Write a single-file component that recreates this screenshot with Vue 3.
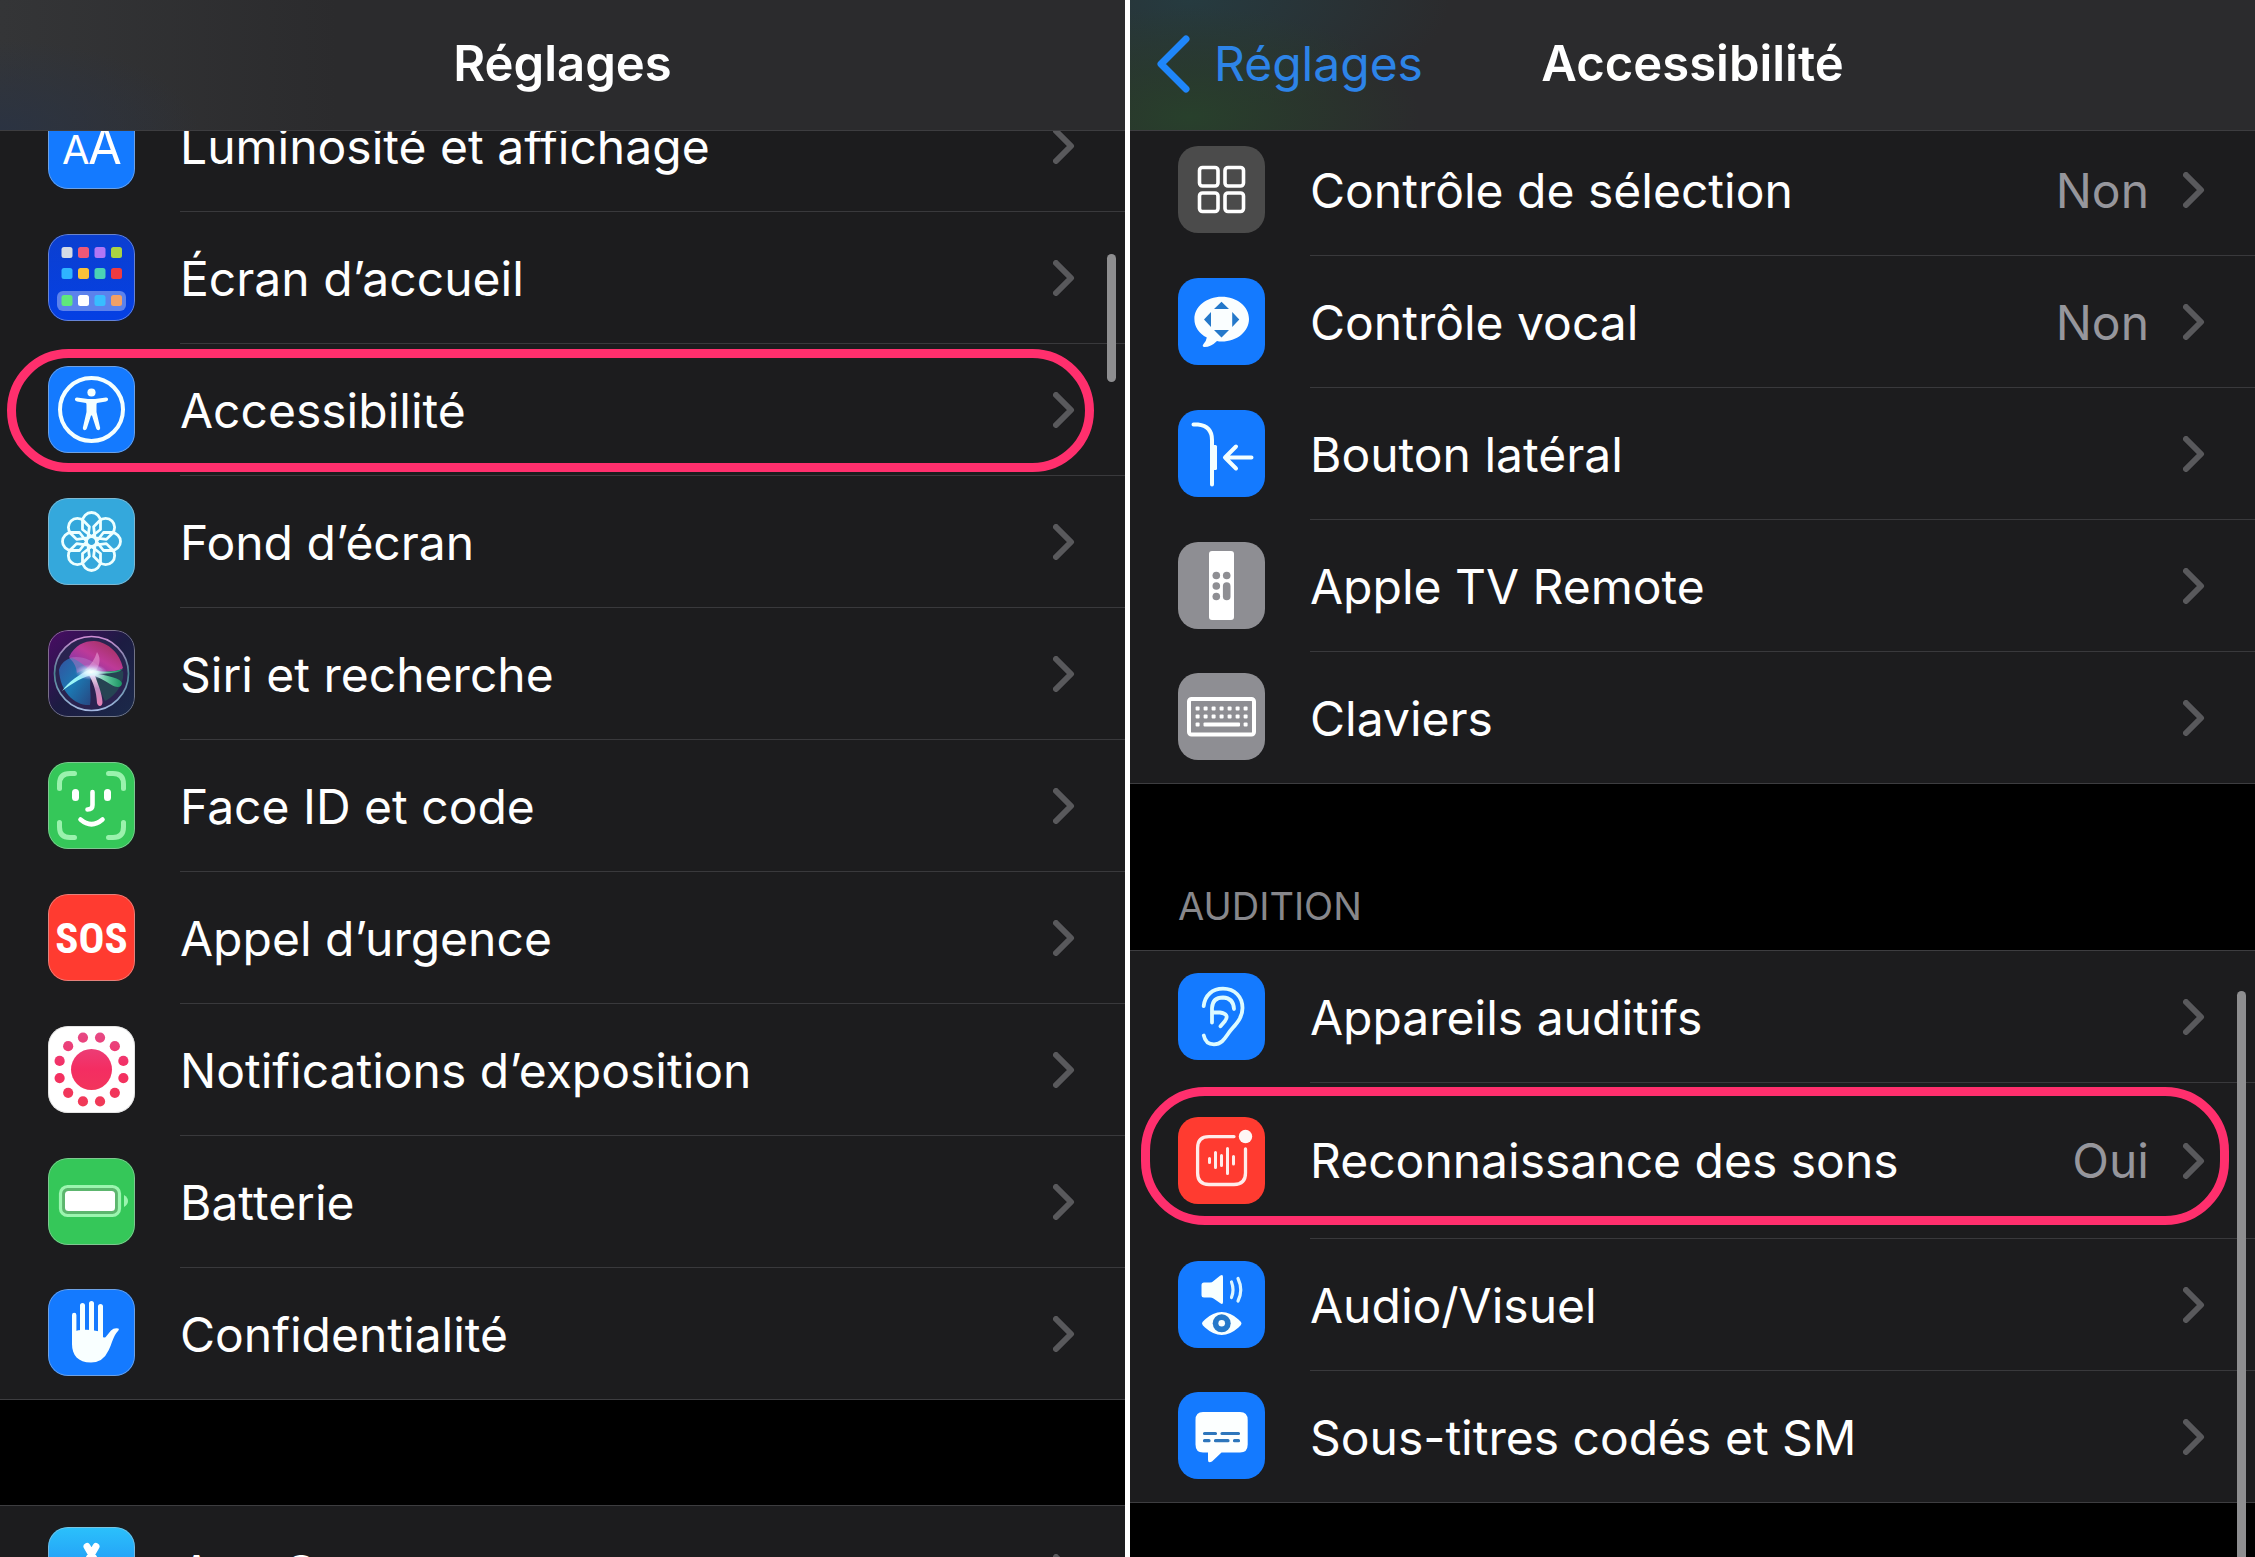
<template>
  <main class="screens">
    <section class="screen">
      <header class="nav-bar nav-settings">
        <h1 class="nav-title">Réglages</h1>
      </header>
      <div class="content content-settings">
        <ul v-for="(group, index) in settingsGroups" :key="index" class="group">
          <li v-for="row in group" :key="row.label" class="row">
            <a href="#" class="row-link">
              <span class="icon bordered" :class="row.icon">
                <svg viewBox="0 0 87 87" aria-hidden="true" v-html="icons[row.icon]"></svg>
              </span>
              <span class="row-body">
                <span class="row-label">{{ row.label }}</span>
                <svg class="chevron" viewBox="0 0 22 36" aria-hidden="true"><path d="M3 3l15 15L3 33" /></svg>
              </span>
            </a>
            <span v-if="row.highlighted" class="ring"></span>
          </li>
        </ul>
      </div>
      <span class="scrollbar scrollbar-settings"></span>
    </section>

    <section class="screen">
      <header class="nav-bar nav-accessibility">
        <a href="#" class="nav-back">
          <svg viewBox="0 0 34 58" aria-hidden="true"><path d="M30 4L5 29l25 25" /></svg>
          <span>Réglages</span>
        </a>
        <h1 class="nav-title">Accessibilité</h1>
      </header>
      <div class="content content-accessibility">
        <template v-for="group in accessibilityGroups" :key="group.id">
          <h2 v-if="group.title" class="group-title">{{ group.title }}</h2>
          <ul class="group">
            <li v-for="row in group.rows" :key="row.label" class="row" :class="{ tall: row.highlighted }">
              <a href="#" class="row-link">
                <span class="icon" :class="row.icon">
                  <svg viewBox="0 0 87 87" aria-hidden="true" v-html="icons[row.icon]"></svg>
                </span>
                <span class="row-body">
                  <span class="row-label">{{ row.label }}</span>
                  <span v-if="row.value" class="row-value">{{ row.value }}</span>
                  <svg class="chevron" viewBox="0 0 22 36" aria-hidden="true"><path d="M3 3l15 15L3 33" /></svg>
                </span>
              </a>
              <span v-if="row.highlighted" class="ring"></span>
            </li>
          </ul>
        </template>
      </div>
      <span class="scrollbar scrollbar-accessibility"></span>
    </section>
  </main>
</template>

<script setup>
const settingsGroups = [
  [
    { label: 'Luminosité et affichage', icon: 'display' },
    { label: 'Écran d’accueil', icon: 'home' },
    { label: 'Accessibilité', icon: 'accessibility', highlighted: true },
    { label: 'Fond d’écran', icon: 'wallpaper' },
    { label: 'Siri et recherche', icon: 'siri' },
    { label: 'Face ID et code', icon: 'faceid' },
    { label: 'Appel d’urgence', icon: 'sos' },
    { label: 'Notifications d’exposition', icon: 'exposure' },
    { label: 'Batterie', icon: 'battery' },
    { label: 'Confidentialité', icon: 'privacy' },
  ],
  [{ label: 'App Store', icon: 'appstore' }],
];

const accessibilityGroups = [
  {
    id: 'motor',
    rows: [
      { label: 'Contrôle de sélection', icon: 'switch', value: 'Non' },
      { label: 'Contrôle vocal', icon: 'voice', value: 'Non' },
      { label: 'Bouton latéral', icon: 'side' },
      { label: 'Apple TV Remote', icon: 'remote' },
      { label: 'Claviers', icon: 'keyboard' },
    ],
  },
  {
    id: 'hearing',
    title: 'AUDITION',
    rows: [
      { label: 'Appareils auditifs', icon: 'hearing' },
      { label: 'Reconnaissance des sons', icon: 'sound', value: 'Oui', highlighted: true },
      { label: 'Audio/Visuel', icon: 'audiovisual' },
      { label: 'Sous-titres codés et SM', icon: 'captions' },
    ],
  },
];

const homeColors = [
  ['#d5dbe6', '#ef5877', '#b176f5', '#aad343'],
  ['#2fb4ff', '#f9c13a', '#4bd3b5', '#ee3b41'],
  ['#5fe87c', '#ffffff', '#38bdff', '#f2a066'],
];
const homeApps = homeColors
  .map((line, y) =>
    line
      .map((fill, x) => `<rect x="${13.5 + x * 16.5}" y="${[13, 34, 61][y]}" width="11" height="11" rx="2.5" fill="${fill}"/>`)
      .join(''),
  )
  .join('');

const petals = [0, 45, 90, 135, 180, 225, 270, 315]
  .map((angle) => `<path transform="rotate(${angle})" d="M0-5L-9-12V-20A9 9 0 0 1 9-20V-12Z"/>`)
  .join('');

const exposureDots = Array.from({ length: 12 }, (_, i) => {
  const angle = ((i * 30 + 15) * Math.PI) / 180;
  return `<circle cx="${43.5 + 33 * Math.cos(angle)}" cy="${43.5 + 33 * Math.sin(angle)}" r="5.1"/>`;
}).join('');

const keyboardKeys = [35.5, 43.5]
  .map((y) => Array.from({ length: 7 }, (_, i) => `<rect x="${17.6 + i * 8}" y="${y - 2}" width="4" height="4" rx="1"/>`).join(''))
  .join('');

const icons = {
  display: `<g fill="#fff" font-family="Inter, sans-serif"><text x="14" y="62" font-size="40">A</text><text x="40" y="62" font-size="49">A</text></g>`,
  home: `<rect x="9" y="57" width="69" height="20" rx="6" fill="#5c82ec"/>${homeApps}`,
  accessibility: `<circle cx="43.5" cy="43.5" r="31.5" fill="none" stroke="#f4ffff" stroke-width="4"/>
    <g fill="#f4ffff"><circle cx="43.5" cy="26.5" r="4.1"/>
    <path d="M29 31.5L40 33H47L58 31.5Q60.5 31.8 60 34Q59.8 35 58 35.4L49 37Q48.5 37.3 48.5 39V46L52.2 62Q52.3 64 50.4 64.3Q48.8 64.3 48.2 62.5L44 49.5H43L38.8 62.5Q38.2 64.3 36.6 64.3Q34.7 64 34.8 62L38.5 46V39Q38.5 37.3 38 37L29 35.4Q27.2 35 27 34Q26.6 31.8 29 31.5Z"/></g>`,
  wallpaper: `<g transform="translate(43.5 43.5)" fill="none" stroke="#edffff" stroke-width="2.8" stroke-linejoin="round">${petals}<circle r="5"/></g>`,
  siri: `<defs>
      <linearGradient id="siri-pink" x1="0" y1="1" x2="1" y2="0"><stop offset="0" stop-color="#6a35b0"/><stop offset=".5" stop-color="#bd3a98"/><stop offset="1" stop-color="#9c2f4c"/></linearGradient>
      <linearGradient id="siri-blue" x1="0" y1="0" x2="1" y2="1"><stop offset="0" stop-color="#33529f"/><stop offset=".5" stop-color="#1c78b2"/><stop offset="1" stop-color="#27457f"/></linearGradient>
      <linearGradient id="siri-green" x1="0" y1="0" x2="1" y2="0"><stop offset="0" stop-color="#d9fff5"/><stop offset=".6" stop-color="#4bb98c"/><stop offset="1" stop-color="#15905d"/></linearGradient>
      <linearGradient id="siri-tail" x1="0" y1="0" x2="0" y2="1"><stop offset="0" stop-color="#fff"/><stop offset=".5" stop-color="#c08cc0"/><stop offset="1" stop-color="#e97fb4"/></linearGradient>
      <radialGradient id="siri-glow"><stop offset="0" stop-color="#fff"/><stop offset=".4" stop-color="#e4f5ff" stop-opacity=".8"/><stop offset="1" stop-color="#c9a8ff" stop-opacity="0"/></radialGradient>
      <linearGradient id="siri-edge" x1="0" y1="0" x2="0" y2="1"><stop offset="0" stop-color="#d08ed5"/><stop offset=".5" stop-color="#4a8290"/><stop offset="1" stop-color="#a4b8e0"/></linearGradient>
    </defs>
    <circle cx="43.5" cy="43.5" r="37" fill="#2a2350"/>
    <path d="M21 27C27 15 36 11 46 11C61 12 72 24 75 38C72 42 60 41 44 43C36 40 27 35 21 27Z" fill="url(#siri-pink)"/>
    <path d="M11 40C13 33 18 29 24 28C33 32 40 38 44 43C40 54 44 65 42 75C27 76 12 62 11 40Z" fill="url(#siri-blue)"/>
    <path d="M44 43L75 41C77 52 68 66 57 71C52 61 48 52 44 43Z" fill="#264453"/>
    <path d="M21 28C32 25 44 29 55 40C44 37 36 39 29 43C28 36 26 32 21 28Z" fill="#b876c8" opacity=".5"/>
    <path d="M49 22C54 29 51 38 46 43L37 40C43 35 47 29 49 22Z" fill="#e79bd4" opacity=".6"/>
    <path d="M44 40C56 42.5 66 42 75 39C72 43 60 43.5 50 44C61 46 72 48 74 53C74 58 68 58 62 54C56 50 50 47 44 45Z" fill="url(#siri-green)"/>
    <path d="M41 41L46 43C50 54 54 63 54.5 72C54.5 77 50 77 49 73C48.5 61 45 52 41 45Z" fill="url(#siri-tail)"/>
    <path d="M14 61C21 51 31 45 42 39L48 44C35 46 25 53 14 61Z" fill="#9bf5f7"/>
    <ellipse cx="43" cy="42" rx="16" ry="8" fill="url(#siri-glow)"/>
    <circle cx="43.5" cy="43.5" r="37" fill="none" stroke="url(#siri-edge)" stroke-width="1.7"/>`,
  faceid: `<g fill="none" stroke-linecap="round"><g stroke="#9af2ad" stroke-width="5"><path d="M11.5 26.5V22Q11.5 11.5 22 11.5H26.5M60.5 11.5H65Q75.5 11.5 75.5 22V26.5M75.5 60.5V65Q75.5 75.5 65 75.5H60.5M26.5 75.5H22Q11.5 75.5 11.5 65V60.5"/></g>
    <g stroke="#fff"><path stroke-width="7" d="M27.5 30.5V35.5M59.5 30.5V35.5"/><path stroke-width="4.6" d="M44.5 30V43Q44.5 47.5 39.5 47.5M32.5 57.5Q43.5 67 54.5 57.5"/></g></g>`,
  sos: `<text x="43.5" y="59" text-anchor="middle" fill="#fff" font-family="Liberation Sans Narrow, Roboto Condensed, DejaVu Sans Condensed, sans-serif" font-weight="700" font-size="43">SOS</text>`,
  exposure: `<defs><linearGradient id="exposure-fill" gradientUnits="userSpaceOnUse" x1="0" y1="6" x2="0" y2="80"><stop offset="0" stop-color="#e64a86"/><stop offset=".5" stop-color="#f42d62"/><stop offset="1" stop-color="#f03b57"/></linearGradient></defs>
    <g fill="url(#exposure-fill)"><circle cx="43.5" cy="43.5" r="20.5"/>${exposureDots}</g>`,
  battery: `<rect x="12.5" y="28.5" width="59" height="29" rx="7" fill="#5cb66e" stroke="#9bf5af" stroke-width="3.2"/><rect x="17" y="33" width="50" height="20" rx="3.5" fill="#fff"/><path d="M76 37Q80 39.5 80 43T76 49Z" fill="#9bf5af"/>`,
  privacy: `<g fill="none" stroke="#f6ffff" stroke-linecap="round"><path stroke-width="4.4" d="M26.2 26V54"/><path stroke-width="5" d="M34.5 16.5V50M43.5 14.5V50M52.5 17.5V50"/></g>
    <path d="M24 43Q32 40 43 41L55 43V48Q57 49.5 58.5 47L63 41.5Q66 38.5 70.5 39.5Q71.5 40.5 70 42C65 47 64 55 60.5 61.5Q55 73.5 43 73.5C30 73.5 24 66 24 55Z" fill="#f9ffff"/>`,
  appstore: `<g stroke="#fff" stroke-width="7" stroke-linecap="round" fill="none"><path d="M48 19.5L26 57.5M39 19.5L61 57.5M15 52H49M61 52H72M24 64L21 69M64 63L67 69"/></g>`,
  switch: `<g fill="none" stroke="#fff" stroke-width="3.6"><rect x="21.5" y="21.5" width="18.5" height="18.5" rx="3"/><rect x="47" y="21.5" width="18.5" height="18.5" rx="3"/><rect x="21.5" y="47" width="18.5" height="18.5" rx="3"/><rect x="47" y="47" width="18.5" height="18.5" rx="3"/></g>`,
  voice: `<path d="M43.7 18.7C59 18.7 71 28.5 71 41S59 63.5 43.7 63.5Q41 63.5 39 63Q33 69 26.5 69Q23.5 68.5 25.5 66Q28.5 62.5 28.8 59.5C21 55.5 16.4 49 16.4 41C16.4 28.5 28.5 18.7 43.7 18.7Z" fill="#fafeff"/>
    <path d="M43.5 23.7L51 31H36ZM43.5 59.5L51 52H36ZM26 41.5L33 34V49ZM61.3 41.5L54.2 34V49Z" fill="#2478ca"/>`,
  side: `<g fill="none" stroke="#f3ffff" stroke-width="4" stroke-linecap="round" stroke-linejoin="round"><path d="M15.5 14.5H20Q34 16 34 30V74.5M73.5 47.5H47M58 36.5L47 47.5L58 58.5"/></g><path d="M34 35H37.5Q39 35 39 36.5V58.5Q39 60 37.5 60H34Z" fill="#f3ffff"/>`,
  remote: `<rect x="31" y="9" width="25" height="69" rx="3" fill="#fff"/><g fill="#8e8e93"><circle cx="38.3" cy="33.5" r="3.8"/><circle cx="48.7" cy="33.5" r="3.8"/><circle cx="38.3" cy="44" r="3.8"/><circle cx="38.3" cy="54.5" r="3.8"/><rect x="44.9" y="40.2" width="7.6" height="18" rx="3.8"/></g>`,
  keyboard: `<rect x="11" y="26" width="65" height="35.5" rx="2.5" fill="none" stroke="#fff" stroke-width="4"/><g fill="#fff">${keyboardKeys}<rect x="17.6" y="49.5" width="4" height="4" rx="1"/><rect x="25.5" y="49.5" width="36.5" height="4" rx="1"/><rect x="65.6" y="49.5" width="4" height="4" rx="1"/></g>`,
  hearing: `<g fill="none" stroke="#ddfbff" stroke-width="3.8" stroke-linecap="round" stroke-linejoin="round"><path d="M25.7 33C27 22 34.5 15.7 45 15.7C57 15.7 64.5 24 64.5 35C64.5 45 58 51 52.5 57.5C48 63 45 71.3 36 71.3Q27.5 71.3 25.8 62.5"/><path d="M34 49.5V35Q34.5 24.5 45 24.5Q55.5 25 56 36M34 39.5H42Q52 41 47 48L42.5 53.2"/></g>`,
  sound: `<g fill="none" stroke="#ffecea" stroke-width="3.3" stroke-linecap="round"><path d="M56 19.6H31Q19.6 19.6 19.6 31V56Q19.6 67.5 31 67.5H56Q67.5 67.5 67.5 56V32"/><path stroke-width="3" d="M31.5 41.5V45.5M37.5 35.5V50.5M43.5 38.5V48.5M49.5 31.5V56.5M55.5 39.5V47"/></g><circle cx="67.5" cy="19.5" r="6.7" fill="#fff7f5"/>`,
  audiovisual: `<path d="M26 21.5H32Q34 21.5 35.5 20L42 14.8Q45 12.5 45 16V41Q45 44.5 42 42L35.5 37.5Q34 36.5 32 36.5H26Q23.5 36.5 23.5 34V24Q23.5 21.5 26 21.5Z" fill="#f8ffff"/>
    <g fill="none" stroke="#dcf5ff" stroke-width="3.2" stroke-linecap="round"><path d="M53.5 21Q56.5 29 53.5 36.5M60 17.5Q65.5 29 60 40"/></g>
    <path d="M24 62.5Q24 61 27 58.5Q35 51 43.7 51T60.5 58.5Q63.5 61 63.5 62.5T60.5 66.5Q52 74 43.7 74T27 66.5Q24 64 24 62.5Z" fill="#f8ffff"/><circle cx="43.7" cy="62.3" r="9" fill="#2478ca"/><circle cx="43.7" cy="62.3" r="3.3" fill="#f8ffff"/>`,
  captions: `<path d="M25 20H62Q69.7 20 69.7 28V52.5Q69.7 60.5 62 60.5H43.5L34 69.5Q30 71.5 30 68V60.5H25Q17.5 60.5 17.5 52.5V28Q17.5 20 25 20Z" fill="#fcffff"/><path d="M26.5 41.5H37.5M44 41.5H60.5M26.5 48.7H31M37.5 48.7H50M56.5 48.7H60.5" stroke="#2d76bc" stroke-width="3.2" stroke-linecap="round"/>`,
};
</script>

<style>
body {
  margin: 0;
  background: #000000;
}
</style>

<style scoped>
.screens {
  display: grid;
  grid-template-columns: 1fr 1fr;
  gap: 5px;
  height: 100vh;
  overflow: hidden;
  background: #ffffff;
  color: #ffffff;
  font-family: Inter, "Noto Sans", sans-serif;
  font-size: 48px;
}

.screen {
  position: relative;
  min-width: 0;
  overflow: hidden;
  background: #000000;
}

.nav-bar {
  position: relative;
  z-index: 1;
  display: grid;
  grid-template-columns: 1fr auto 1fr;
  align-items: center;
  box-sizing: border-box;
  height: 131px;
  padding-bottom: 2px;
  border-bottom: 1px solid #3d3d40;
  background-color: #2b2b2d;
}

.nav-settings {
  background-image:
    radial-gradient(ellipse 200px 90px at 0 100%, #2b3342, transparent),
    linear-gradient(90deg, #343537, #2b2b2d 30%);
}

.nav-accessibility {
  background-image:
    radial-gradient(ellipse 230px 110px at 60px 90%, #28402c, transparent),
    radial-gradient(ellipse 260px 110px at 60px 0, #263b40, transparent);
}

.nav-title {
  grid-column: 2;
  margin: 0;
  font-size: 49px;
  font-weight: 600;
  line-height: 60px;
}

.nav-back {
  display: flex;
  align-items: center;
  gap: 24px;
  padding-left: 26px;
  color: #2d84e8;
  line-height: 60px;
  text-decoration: none;
}

.nav-back svg {
  width: 34px;
  height: 58px;
  fill: none;
  stroke: #1f86fa;
  stroke-width: 7px;
  stroke-linecap: round;
  stroke-linejoin: round;
}

/* The lists are scrolled so their first row slides under the bar. */
.content-settings {
  margin-top: -52px;
}

.content-accessibility {
  margin-top: -8px;
}

.group {
  margin: 0;
  padding: 0;
  list-style: none;
  border-top: 1px solid #3d3d40;
  border-bottom: 1px solid #3d3d40;
  background: #1c1c1e;
}

.group + .group {
  margin-top: 105px;
}

.group-title {
  margin: 0;
  padding: 98px 48px 20px;
  color: #87878b;
  font-size: 38px;
  font-weight: 400;
  line-height: 48px;
}

.row {
  position: relative;
}

.row-link {
  display: flex;
  align-items: center;
  gap: 45px;
  height: 132px;
  padding-left: 48px;
  color: inherit;
  text-decoration: none;
}

.tall .row-link {
  height: 156px;
}

.row:last-child .row-link {
  height: 131px;
}

.icon {
  flex: none;
  width: 87px;
  height: 87px;
  margin-bottom: 2px;
  border-radius: 20px;
  overflow: hidden;
  background: #147aff;
}

.icon svg {
  display: block;
  width: 100%;
  height: 100%;
}

.bordered {
  position: relative;
}

.bordered::after {
  content: "";
  position: absolute;
  inset: 0;
  border: 1px solid rgba(200, 200, 200, 0.5);
  border-radius: inherit;
}

.home {
  background: linear-gradient(#0b3fd0, #0540e4);
}

.wallpaper {
  background: #34a8dc;
}

.siri {
  background: linear-gradient(135deg, #4b0b65, #1c1c42 50%, #1b2a4a);
}

.faceid,
.battery {
  background: #35c759;
}

.sos,
.sound {
  background: #ff3b30;
}

.exposure {
  background: #ffffff;
}

.appstore {
  background: linear-gradient(#2bc1fb, #1a72f1);
}

.switch {
  background: #4b4b4b;
}

.remote,
.keyboard {
  background: #8e8e93;
}

.row-body {
  display: flex;
  flex: 1;
  align-items: center;
  align-self: stretch;
  min-width: 0;
  padding-right: 50px;
  border-bottom: 1px solid #39393c;
}

.row:last-child .row-body {
  border-bottom: none;
}

.row-label,
.row-value {
  padding-top: 3px;
  line-height: 60px;
  white-space: nowrap;
}

.tall .row-label,
.tall .row-value {
  padding-top: 0;
}

.row-label {
  flex: 1;
}

.row-value {
  margin-right: 34px;
  color: #96969c;
}

.chevron {
  flex: none;
  width: 22px;
  height: 36px;
  fill: none;
  stroke: #59595c;
  stroke-width: 6px;
  stroke-linecap: round;
  stroke-linejoin: round;
}

.ring {
  position: absolute;
  inset: 5px 31px 4px 7px;
  border: 9px solid #ff2f6d;
  border-radius: 64px;
  pointer-events: none;
}

.tall .ring {
  inset: 4px 26px 14px 11px;
}

.scrollbar {
  position: absolute;
  z-index: 2;
  right: 9px;
  width: 9px;
  border-radius: 5px;
  background: #8e8e90;
}

.scrollbar-settings {
  top: 254px;
  height: 128px;
}

.scrollbar-accessibility {
  top: 991px;
  bottom: -20px;
}
</style>
